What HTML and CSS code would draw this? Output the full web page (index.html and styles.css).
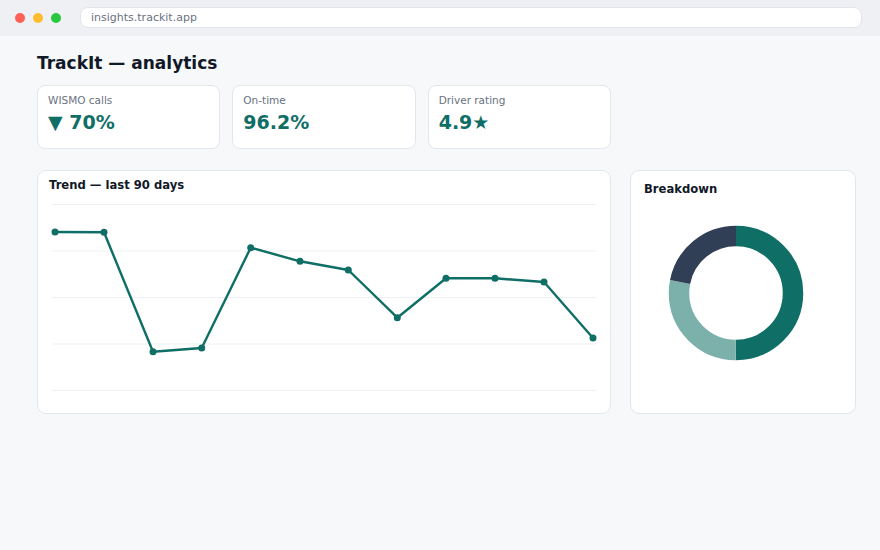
FILE: index.html
```html
<!DOCTYPE html>
<html lang="en">
<head>
<meta charset="utf-8">
<title>TrackIt — analytics</title>
<link rel="stylesheet" href="styles.css">
</head>
<body>
  <header class="chrome">
    <div class="dots">
      <span class="dot dot-red"></span>
      <span class="dot dot-yellow"></span>
      <span class="dot dot-green"></span>
    </div>
    <div class="url">insights.trackit.app</div>
  </header>

  <main class="page">
    <h1 class="title">TrackIt — analytics</h1>

    <section class="kpis">
      <div class="kpi">
        <div class="kpi-label">WISMO calls</div>
        <div class="kpi-value">▼ 70%</div>
      </div>
      <div class="kpi">
        <div class="kpi-label">On-time</div>
        <div class="kpi-value">96.2%</div>
      </div>
      <div class="kpi">
        <div class="kpi-label">Driver rating</div>
        <div class="kpi-value">4.9★</div>
      </div>
    </section>

    <section class="card trend">
      <h2 class="card-title">Trend — last 90 days</h2>
      <svg class="trend-chart" width="552" height="200" viewBox="0 0 552 200">
        <g class="grid">
          <line x1="4" y1="6.5" x2="548" y2="6.5"/>
          <line x1="4" y1="53" x2="548" y2="53"/>
          <line x1="4" y1="99.5" x2="548" y2="99.5"/>
          <line x1="4" y1="146" x2="548" y2="146"/>
          <line x1="4" y1="192.5" x2="548" y2="192.5"/>
        </g>
        <polyline class="series" points="7,34 56,34.3 105,153.7 153.7,150 202.7,49.7 252,63.3 300.3,72 349.3,119.7 398,80.3 447,80.3 496,84 545,140"/>
        <g class="points">
          <circle cx="7" cy="34" r="3.5"/>
          <circle cx="56" cy="34.3" r="3.5"/>
          <circle cx="105" cy="153.7" r="3.5"/>
          <circle cx="153.7" cy="150" r="3.5"/>
          <circle cx="202.7" cy="49.7" r="3.5"/>
          <circle cx="252" cy="63.3" r="3.5"/>
          <circle cx="300.3" cy="72" r="3.5"/>
          <circle cx="349.3" cy="119.7" r="3.5"/>
          <circle cx="398" cy="80.3" r="3.5"/>
          <circle cx="447" cy="80.3" r="3.5"/>
          <circle cx="496" cy="84" r="3.5"/>
          <circle cx="545" cy="140" r="3.5"/>
        </g>
      </svg>
    </section>

    <section class="card breakdown">
      <h2 class="card-title">Breakdown</h2>
      <div class="donut-wrap">
        <svg class="donut" width="160" height="160" viewBox="0 0 160 160">
          <g transform="rotate(-90 80 80)">
            <circle class="seg seg-a" cx="80" cy="80" r="57" stroke-dasharray="179.07 358.14" stroke-dashoffset="0"/>
            <circle class="seg seg-b" cx="80" cy="80" r="57" stroke-dasharray="100.28 358.14" stroke-dashoffset="-179.07"/>
            <circle class="seg seg-c" cx="80" cy="80" r="57" stroke-dasharray="78.79 358.14" stroke-dashoffset="-279.35"/>
          </g>
        </svg>
      </div>
    </section>
  </main>
</body>
</html>
```

FILE: styles.css
```css
* {
  box-sizing: border-box;
}

html,
body {
  margin: 0;
  padding: 0;
  background: #f7f8fa;
  font-family: "DejaVu Sans", "Noto Sans", sans-serif;
  color: #111827;
}

body {
  width: 880px;
  height: 550px;
  overflow: hidden;
}

/* window chrome */
.chrome {
  height: 36px;
  background: #eef0f4;
  display: flex;
  align-items: center;
  padding: 0 18px 0 15px;
  gap: 19px;
}

.dots {
  display: flex;
  gap: 8px;
}

.dot {
  width: 10px;
  height: 10px;
  border-radius: 50%;
}

.dot-red { background: #ff5f57; }
.dot-yellow { background: #febc2e; }
.dot-green { background: #28c840; }

.url {
  flex: 1;
  height: 21px;
  margin-top: -1px;
  background: #ffffff;
  border: 1px solid #e1e5eb;
  border-radius: 8px;
  padding: 0 10px;
  font-size: 11px;
  line-height: 19px;
  color: #6b7280;
}

/* page */
.page {
  display: grid;
  grid-template-columns: 574px 226px;
  column-gap: 19px;
  padding: 17px 24px 0 37px;
}

.title {
  grid-column: 1 / -1;
  margin: 0 0 12px;
  font-size: 17px;
  font-weight: 700;
  line-height: 20px;
  color: #111827;
}

.kpis {
  grid-column: 1;
  display: grid;
  grid-template-columns: repeat(3, 1fr);
  gap: 12px;
  margin-bottom: 21px;
}

.kpi {
  height: 64px;
  background: #ffffff;
  border: 1px solid #e2e6ee;
  border-radius: 8px;
  padding: 8px 10px;
}

.kpi-label {
  font-size: 10.5px;
  line-height: 12px;
  color: #6b7280;
}

.kpi-value {
  margin-top: 5px;
  font-size: 19px;
  font-weight: 700;
  line-height: 22px;
  color: #0f6e66;
}

.card {
  height: 244px;
  background: #ffffff;
  border: 1px solid #e2e6ee;
  border-radius: 9px;
}

.card-title {
  margin: 0;
  font-size: 11.6px;
  font-weight: 700;
  line-height: 14px;
  color: #111827;
}

.trend {
  grid-column: 1;
  padding: 7px 10px 0 11px;
}

.trend-chart {
  display: block;
  margin: 6px 0 0 -1px;
}

.grid line {
  stroke: #eef1f5;
  stroke-width: 1;
}

.series {
  fill: none;
  stroke: #0f6e66;
  stroke-width: 2.4;
  stroke-linejoin: round;
}

.points circle {
  fill: #0f6e66;
}

.breakdown {
  grid-column: 2;
  padding: 11px 12px 0 13px;
}

.donut-wrap {
  margin: 17px 0 0 12px;
}

.donut {
  display: block;
}

.seg {
  fill: none;
  stroke-width: 20.5;
}

.seg-a { stroke: #0f6e66; }
.seg-b { stroke: #7bb0ab; }
.seg-c { stroke: #313f56; }
```
